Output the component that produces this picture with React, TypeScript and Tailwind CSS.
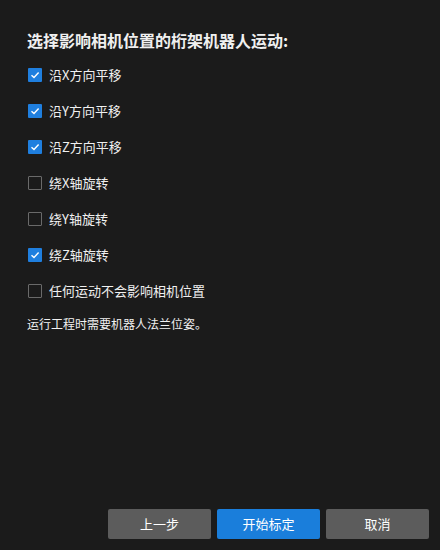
import { useState } from "react";

const options = [
  { label: "沿X方向平移", checked: true },
  { label: "沿Y方向平移", checked: true },
  { label: "沿Z方向平移", checked: true },
  { label: "绕X轴旋转", checked: false },
  { label: "绕Y轴旋转", checked: false },
  { label: "绕Z轴旋转", checked: true },
  { label: "任何运动不会影响相机位置", checked: false },
];

export default function App() {
  const [items, setItems] = useState(options);

  const toggle = (index: number) => {
    setItems((prev) =>
      prev.map((item, i) =>
        i === index ? { ...item, checked: !item.checked } : item,
      ),
    );
  };

  return (
    <div
      className="w-[440px] h-[550px] bg-[#1b1b1b] text-[#f0f0f0] flex flex-col"
      style={{ fontFamily: '"Noto Sans CJK SC", "Noto Sans", sans-serif' }}
    >
      <div className="flex-1 pl-[27px] pt-[29px]">
        <h1 className="text-[16px] font-bold leading-[22px]">
          选择影响相机位置的桁架机器人运动:
        </h1>

        <div className="mt-[17px] flex flex-col gap-[22px] pl-px">
          {items.map((item, index) => (
            <label
              key={index}
              className="flex items-center gap-[7px] h-[14px] cursor-pointer text-[13px]"
              onClick={() => toggle(index)}
            >
              {item.checked ? (
                <span className="w-[14px] h-[14px] bg-[#1f7fdf] rounded-[1px] flex items-center justify-center">
                  <svg width="10" height="10" viewBox="0 0 10 10">
                    <path
                      d="M1.5 5.2 L4 7.5 L8.6 2.5"
                      fill="none"
                      stroke="#ffffff"
                      strokeWidth="1.4"
                    />
                  </svg>
                </span>
              ) : (
                <span className="w-[14px] h-[14px] border border-[#6a6a6a] rounded-[1px]" />
              )}
              <span>{item.label}</span>
            </label>
          ))}
        </div>

        <p className="mt-[17px] text-[12px] leading-[18px]">
          运行工程时需要机器人法兰位姿。
        </p>
      </div>

      <div className="flex justify-end gap-[6px] pr-[11px] pb-[11px]">
        <button className="w-[103px] h-[30px] bg-[#5c5c5c] rounded-[2px] text-[13px] text-white">
          上一步
        </button>
        <button className="w-[103px] h-[30px] bg-[#1a7edb] rounded-[2px] text-[13px] text-white">
          开始标定
        </button>
        <button className="w-[103px] h-[30px] bg-[#5c5c5c] rounded-[2px] text-[13px] text-white">
          取消
        </button>
      </div>
    </div>
  );
}
